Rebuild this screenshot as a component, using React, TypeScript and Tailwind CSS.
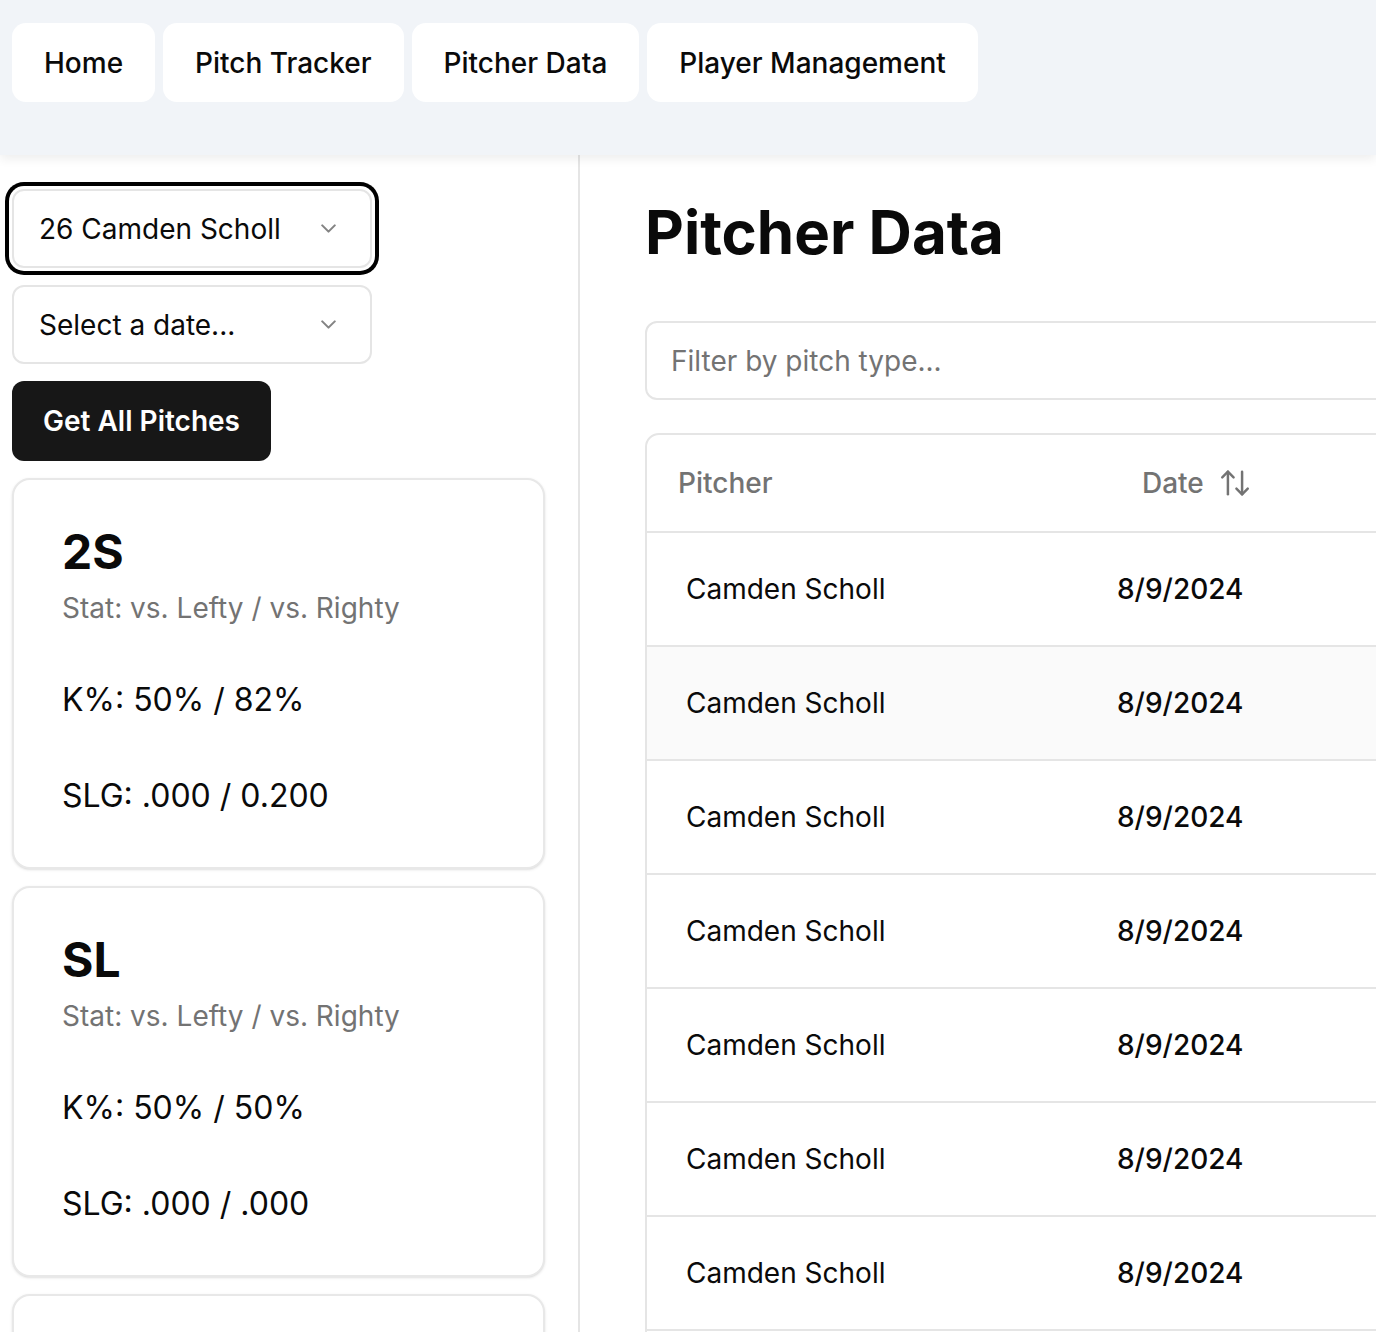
import { ArrowUpDown, ChevronDown } from "lucide-react";

const navItems = ["Home", "Pitch Tracker", "Pitcher Data", "Player Management"];

const pitchCards = [
  { type: "2S", k: "50% / 82%", slg: ".000 / 0.200" },
  { type: "SL", k: "50% / 50%", slg: ".000 / .000" },
  { type: "CH", k: "33% / 40%", slg: ".000 / .250" },
];

const rows = Array.from({ length: 8 }, (_, i) => ({
  id: i,
  pitcher: "Camden Scholl",
  date: "8/9/2024",
}));

const SelectBox = ({ label, focused }: { label: string; focused?: boolean }) => (
  <div
    className={`flex h-[79px] w-[360px] shrink-0 items-center justify-between rounded-[12px] border-2 border-[#e5e5e5] bg-white pl-[25px] pr-[29px] text-[28px] text-[#0a0a0a] ${
      focused ? "ring-4 ring-black ring-offset-[3px] ring-offset-white" : ""
    }`}
  >
    <span>{label}</span>
    <ChevronDown size={25} strokeWidth={2} className="text-[#0a0a0a] opacity-50" />
  </div>
);

const PitchCard = ({ type, k, slg }: { type: string; k: string; slg: string }) => (
  <div className="w-[533px] shrink-0 rounded-[18px] border-2 border-[#e8e8e8] bg-white px-[48px] pb-[51px] pt-[49px] shadow-sm">
    <h3 className="text-[48px] font-bold leading-[46px] text-[#0a0a0a]">{type}</h3>
    <p className="mt-[13px] text-[28px] leading-[40px] text-[#737373]">Stat: vs. Lefty / vs. Righty</p>
    <p className="mt-[52px] text-[32px] leading-[40px] text-[#0a0a0a]">K%: {k}</p>
    <p className="mt-[56px] text-[32px] leading-[40px] text-[#0a0a0a]">SLG: {slg}</p>
  </div>
);

export default function App() {
  return (
    <div
      className="flex h-screen flex-col overflow-hidden bg-white text-[#0a0a0a]"
      style={{ fontFamily: "Inter, 'Noto Sans', sans-serif" }}
    >
      <header className="relative z-10 h-[155px] shrink-0 bg-[#f1f4f8] shadow-[0_4px_10px_rgba(0,0,0,0.07)]">
        <nav className="flex gap-[8px] pl-[12px] pt-[23px]">
          {navItems.map((item) => (
            <div
              key={item}
              className="flex h-[79px] items-center rounded-[14px] bg-white px-[32px] text-[28px] font-medium"
            >
              {item}
            </div>
          ))}
        </nav>
      </header>

      <div className="flex min-h-0 flex-1">
        <aside className="flex w-[580px] shrink-0 flex-col gap-[17px] overflow-hidden border-r-2 border-[#e5e5e5] pl-[12px] pt-[34px]">
          <SelectBox label="26 Camden Scholl" focused />
          <SelectBox label="Select a date..." />
          <button className="h-[80px] w-[259px] shrink-0 rounded-[12px] bg-[#171717] text-[28px] font-semibold text-white">
            Get All Pitches
          </button>
          {pitchCards.map((c) => (
            <PitchCard key={c.type} {...c} />
          ))}
        </aside>

        <main className="min-w-0 flex-1 pl-[65px] pt-[47px]">
          <div className="w-[1000px]">
            <h1 className="text-[60px] font-bold leading-[60px]">Pitcher Data</h1>
            <div className="mt-[59px] flex h-[79px] items-center rounded-[12px] border-2 border-[#e5e5e5] pl-[24px] text-[28px] text-[#737373]">
              Filter by pitch type...
            </div>
            <div className="mt-[33px] rounded-[14px] border-2 border-[#e5e5e5]">
              <div className="flex h-[98px] items-center border-b-2 border-[#e5e5e5] text-[28px] font-medium text-[#737373]">
                <div className="w-[441px] pl-[31px]">Pitcher</div>
                <div className="flex items-center gap-[14px] pl-[54px]">
                  <span>Date</span>
                  <ArrowUpDown size={34} strokeWidth={1.75} />
                </div>
              </div>
              {rows.map((r) => (
                <div
                  key={r.id}
                  className={`flex h-[114px] items-center border-b-2 border-[#e5e5e5] text-[28px] ${
                    r.id === 1 ? "bg-[#fafafa]" : ""
                  }`}
                >
                  <div className="w-[441px] pl-[39px]">{r.pitcher}</div>
                  <div className="pl-[29px] font-medium">{r.date}</div>
                </div>
              ))}
            </div>
          </div>
        </main>
      </div>
    </div>
  );
}
